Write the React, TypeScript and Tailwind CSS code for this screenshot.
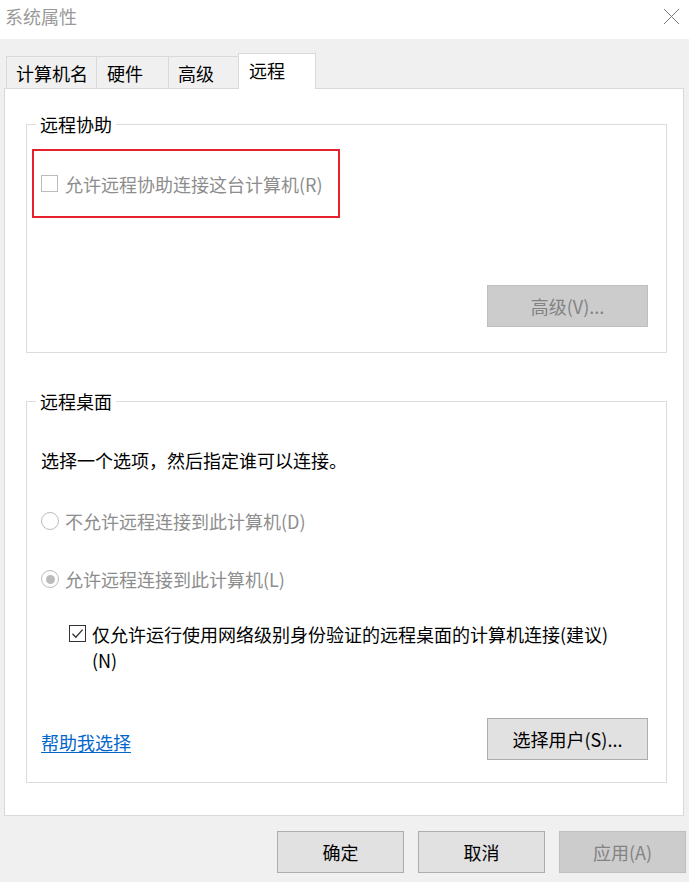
import type { ReactNode } from 'react'

function CloseIcon() {
  return (
    <svg width="17" height="17" viewBox="0 0 17 17" className="shrink-0">
      <path d="M1 1L16 16M16 1L1 16" stroke="#7a7a7a" strokeWidth="1" fill="none" />
    </svg>
  )
}

function CheckBox({ checked = false, disabled = false }: { checked?: boolean; disabled?: boolean }) {
  return (
    <span
      className={`flex h-[17px] w-[17px] shrink-0 items-center justify-center border bg-white ${
        disabled ? 'border-[#bcbcbc]' : 'border-[#333333]'
      }`}
    >
      {checked && (
        <svg width="13" height="13" viewBox="0 0 13 13">
          <path d="M1.5 6.8L4.8 10.2L11.6 2.6" stroke="#333333" strokeWidth="1.3" fill="none" />
        </svg>
      )}
    </span>
  )
}

function Radio({ checked = false }: { checked?: boolean }) {
  return (
    <span className="flex h-[18px] w-[18px] shrink-0 items-center justify-center rounded-full border border-[#bcbcbc] bg-white">
      {checked && <span className="h-[9px] w-[9px] rounded-full bg-[#bcbcbc]" />}
    </span>
  )
}

function Button({
  children,
  width,
  disabled = false,
}: {
  children: ReactNode
  width: string
  disabled?: boolean
}) {
  return (
    <div
      className={`flex h-[42px] items-center justify-center border ${width} ${
        disabled
          ? 'border-[#bfbfbf] bg-[#cccccc] text-[#838383]'
          : 'border-[#adadad] bg-[#e1e1e1] text-black'
      }`}
    >
      {children}
    </div>
  )
}

function GroupBox({ title, className, children }: { title: string; className: string; children: ReactNode }) {
  return (
    <div className={`relative border border-[#dcdcdc] ${className}`}>
      <span className="absolute -top-[14px] left-[9px] bg-white px-[4px] leading-[26px]">{title}</span>
      {children}
    </div>
  )
}

export default function App() {
  return (
    <div className="flex h-[882px] w-[689px] flex-col overflow-hidden bg-[#f0f0f0] font-['Noto_Sans_CJK_SC','Microsoft_YaHei',sans-serif] text-[18px] leading-[26px] text-black">
      {/* title bar */}
      <div className="flex h-[39px] shrink-0 items-start justify-between bg-white">
        <span className="mt-[3px] pl-[5px] text-[#999999]">系统属性</span>
        <div className="mr-[9px] mt-[8px]">
          <CloseIcon />
        </div>
      </div>

      {/* tabs */}
      <div className="mt-[14px] flex h-[35px] items-end pl-[6px]">
        <div className="flex h-[32px] w-[91px] items-center border border-b-0 border-[#d9d9d9] pl-[9px]">计算机名</div>
        <div className="-ml-px flex h-[32px] w-[73px] items-center border border-b-0 border-[#d9d9d9] pl-[10px]">硬件</div>
        <div className="-ml-px flex h-[32px] w-[71px] items-center border border-b-0 border-[#d9d9d9] pl-[9px]">高级</div>
        <div className="relative z-10 -mb-px -ml-px flex h-[36px] w-[78px] items-start border border-b-0 border-[#d9d9d9] bg-white pl-[10px] pt-[3px]">
          远程
        </div>
      </div>

      {/* tab panel */}
      <div className="ml-[4px] flex h-[728px] w-[680px] flex-col border border-[#d9d9d9] bg-white pl-[21px]">
        <GroupBox title="远程协助" className="mt-[35px] flex h-[229px] w-[641px] flex-col">
          <div className="ml-[5px] mt-[24px] flex h-[69px] w-[308px] items-center gap-[7px] border-2 border-[#e5212b] pl-[7px] text-[#8d8d8d]">
            <CheckBox disabled />
            <span>允许远程协助连接这台计算机(R)</span>
          </div>
          <div className="mt-[67px] flex justify-end pr-[18px]">
            <Button width="w-[161px]" disabled>
              高级(V)...
            </Button>
          </div>
        </GroupBox>

        <GroupBox title="远程桌面" className="mt-[48px] flex h-[382px] w-[641px] flex-col pl-[14px]">
          <p className="mt-[45px]">选择一个选项，然后指定谁可以连接。</p>
          <div className="mt-[35px] flex items-center gap-[6px] text-[#8d8d8d]">
            <Radio />
            <span>不允许远程连接到此计算机(D)</span>
          </div>
          <div className="mt-[32px] flex items-center gap-[6px] text-[#8d8d8d]">
            <Radio checked />
            <span>允许远程连接到此计算机(L)</span>
          </div>
          <div className="ml-[28px] mt-[29px] flex items-start gap-[6px]">
            <div className="mt-[4px]">
              <CheckBox checked />
            </div>
            <span>
              仅允许运行使用网络级别身份验证的远程桌面的计算机连接(建议)
              <br />
              (N)
            </span>
          </div>
          <div className="mt-[45px] flex items-center justify-between pr-[18px]">
            <a className="mt-[6px] text-[#0066cc] underline underline-offset-2">帮助我选择</a>
            <Button width="w-[161px]">选择用户(S)...</Button>
          </div>
        </GroupBox>
      </div>

      {/* dialog buttons */}
      <div className="mt-[15px] flex justify-end gap-[14px] pr-[3px]">
        <Button width="w-[127px]">确定</Button>
        <Button width="w-[127px]">取消</Button>
        <Button width="w-[127px]" disabled>
          应用(A)
        </Button>
      </div>
    </div>
  )
}
